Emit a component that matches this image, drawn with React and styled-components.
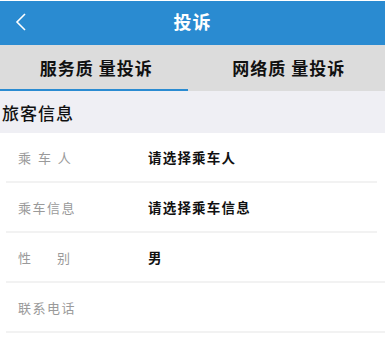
import React, { useState } from 'react';
import styled, { createGlobalStyle } from 'styled-components';

const Global = createGlobalStyle`
  body {
    margin: 0;
    background: #ffffff;
    font-family: "Noto Sans CJK SC", "Noto Sans", sans-serif;
  }
`

const Page = styled.div`
  width: 385px;
  padding-top: 1px;
  background: #ffffff;
`

// 顶部标题栏
const Header = styled.div`
  height: 44px;
  background: #2a8bd1;
  display: flex;
  align-items: center;
  justify-content: center;
  position: relative;
`
const Back = styled.div`
  position: absolute;
  left: 14px;
  top: 10px;
  width: 16px;
  height: 22px;
`
const Title = styled.div`
  color: #ffffff;
  font-size: 18px;
  font-weight: 700;
  letter-spacing: 1px;
  margin-top: -4px;
`

// 标签页
const Tabs = styled.div`
  display: flex;
  height: 46px;
  background: #dcdcdc;
`
const Tab = styled.div`
  flex: 1;
  display: flex;
  align-items: center;
  justify-content: center;
  font-size: 17px;
  font-weight: 700;
  letter-spacing: 1px;
  color: #111;
  padding-bottom: 2px;
  position: relative;
  &::after {
    content: '';
    position: absolute;
    left: 0;
    bottom: 0;
    width: calc(100% - 5px);
    height: 2px;
    background: ${p => (p.active ? '#2a8bd1' : 'transparent')};
  }
`

const Section = styled.div`
  height: 42px;
  background: #efeff4;
  display: flex;
  align-items: center;
  padding-left: 2px;
  font-size: 17px;
  font-weight: 500;
  letter-spacing: 1px;
  color: #111;
`

const List = styled.div`
  background: #ffffff;
`
const Row = styled.div`
  height: 48px;
  display: flex;
  align-items: center;
  margin-left: 6px;
  margin-right: ${p => (p.short ? '8px' : '0')};
  padding-left: 12px;
  border-bottom: 2px solid #f2f2f2;
`
const Label = styled.div`
  width: 130px;
  font-size: 13px;
  color: #9a9a9a;
  letter-spacing: ${p => p.spacing || '1.5px'};
`
const Value = styled.div`
  font-size: 13.5px;
  font-weight: 700;
  color: #111;
  letter-spacing: 1.2px;
`

const rows = [
  { label: '乘 车 人', value: '请选择乘车人', spacing: '2px', short: true },
  { label: '乘车信息', value: '请选择乘车信息', short: true },
  { label: '性　　别', value: '男', spacing: '0px' },
  { label: '联系电话', value: '' },
]

function App() {
  const [tab, setTab] = useState(0);
  return (
    <Page>
      <Global />
      <Header>
        <Back>
          <svg width="16" height="22" viewBox="0 0 16 22">
            <path d="M11 3 L3 11 L11 19" fill="none" stroke="#fff" strokeWidth="1.6" />
          </svg>
        </Back>
        <Title>投诉</Title>
      </Header>
      <Tabs>
        <Tab active={tab === 0} onClick={() => setTab(0)}>服务质 量投诉</Tab>
        <Tab active={tab === 1} onClick={() => setTab(1)}>网络质 量投诉</Tab>
      </Tabs>
      <Section>旅客信息</Section>
      <List>
        {rows.map(r => (
          <Row key={r.label} short={r.short}>
            <Label spacing={r.spacing}>{r.label}</Label>
            <Value>{r.value}</Value>
          </Row>
        ))}
      </List>
    </Page>
  )
}

export default App
